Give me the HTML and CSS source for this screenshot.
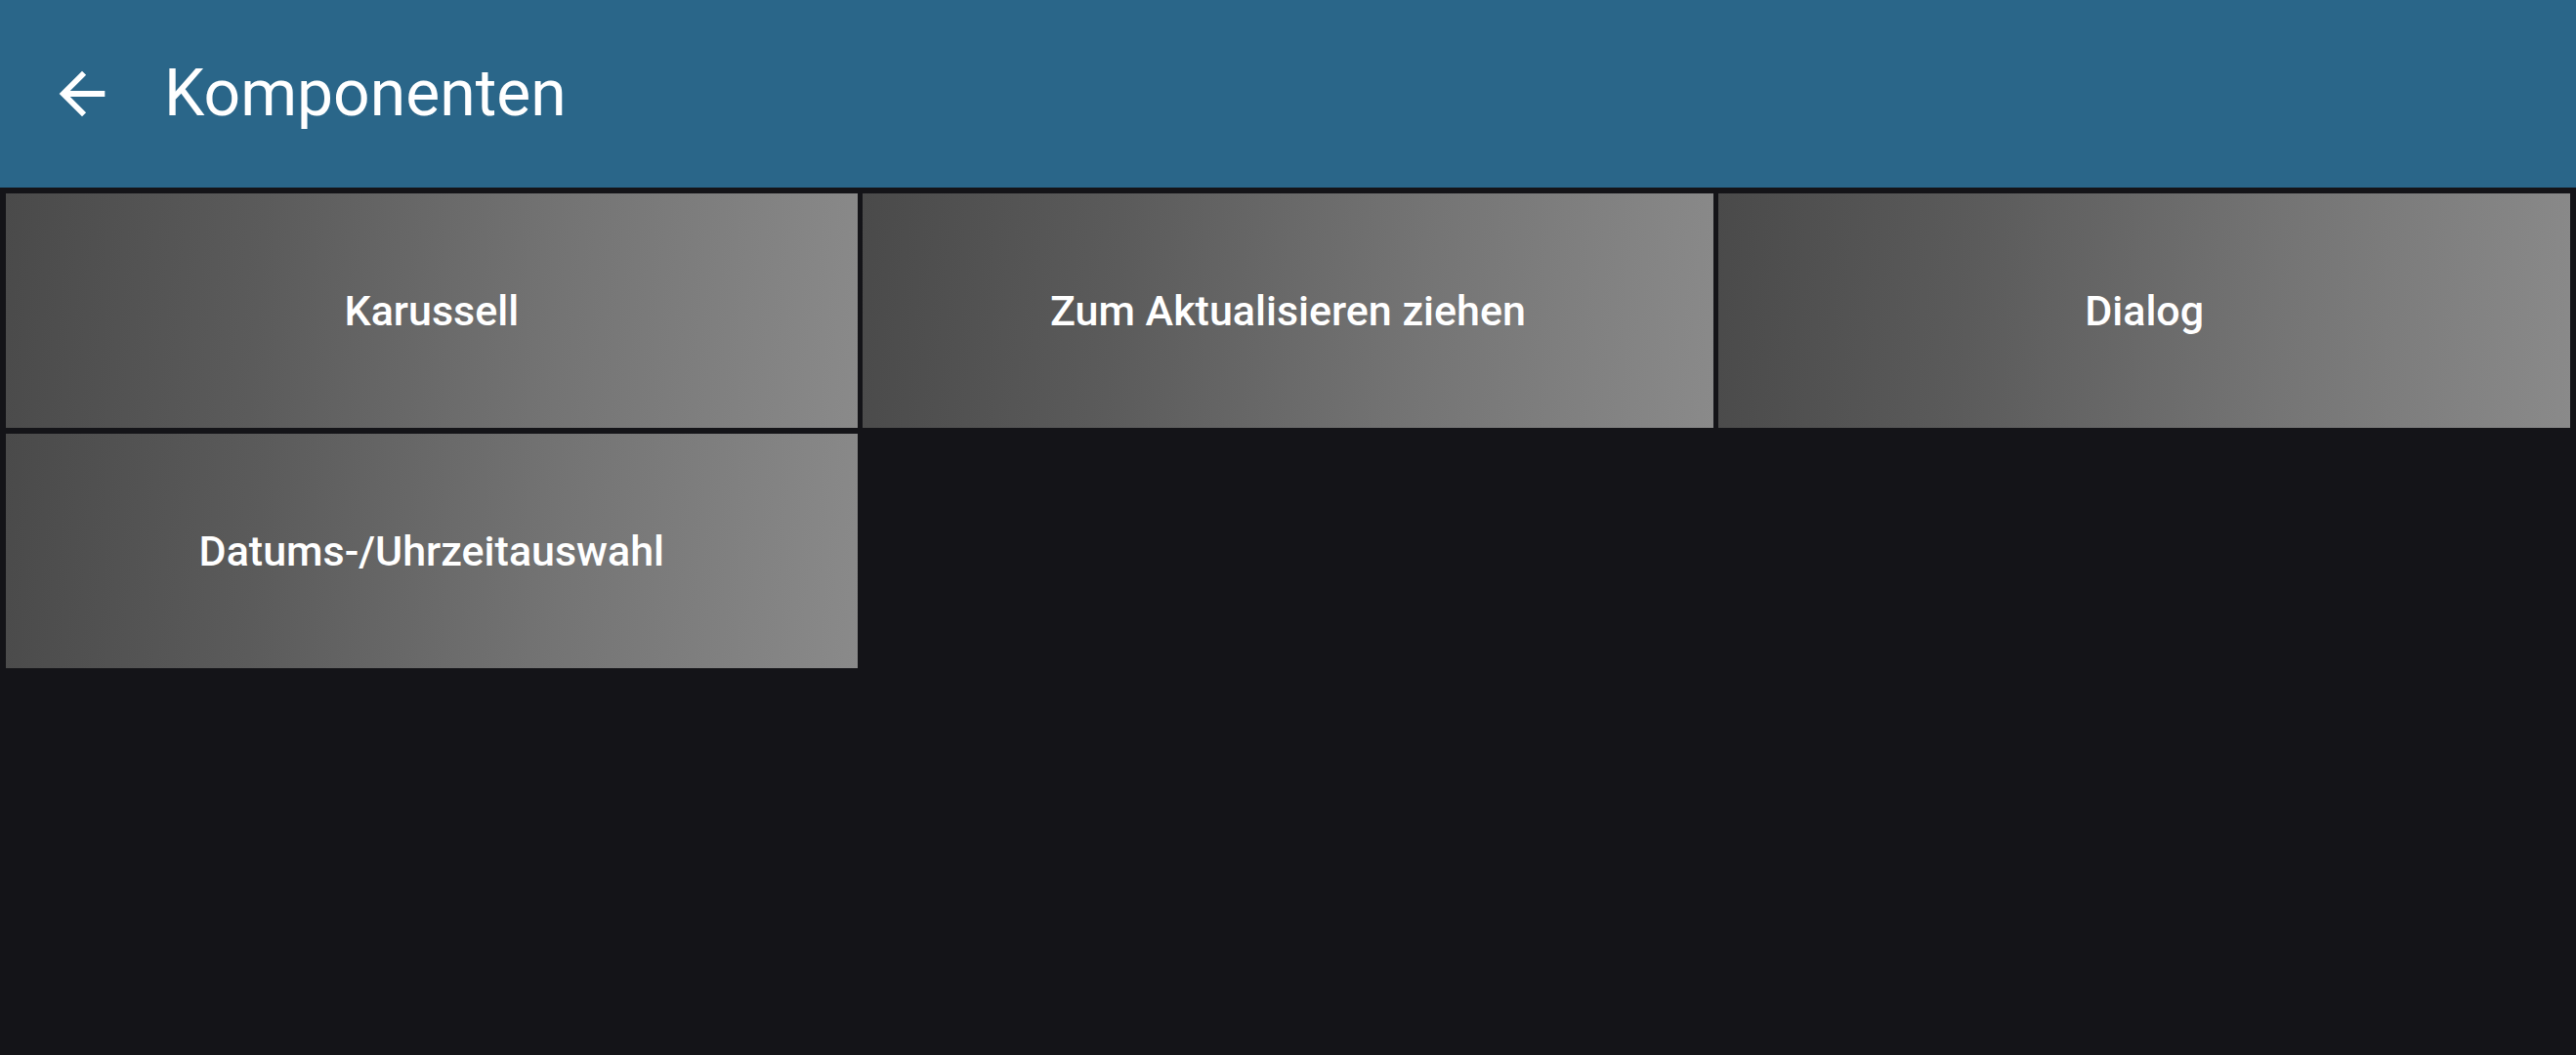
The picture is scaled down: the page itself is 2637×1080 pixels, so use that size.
FILE: index.html
```html
<!DOCTYPE html>
<html lang="de">
<head>
<meta charset="utf-8">
<title>Komponenten</title>
<link rel="stylesheet" href="styles.css">
</head>
<body>
<header class="appbar">
  <button class="back" aria-label="Zurück">
    <svg viewBox="0 0 24 24" width="70" height="70"><path fill="#ffffff" d="M20 11H7.83l5.59-5.59L12 4l-8 8 8 8 1.41-1.41L7.83 13H20v-2z"/></svg>
  </button>
  <h1 class="title">Komponenten</h1>
</header>
<main class="grid">
  <div class="tile">Karussell</div>
  <div class="tile">Zum Aktualisieren ziehen</div>
  <div class="tile">Dialog</div>
  <div class="tile">Datums-/Uhrzeitauswahl</div>
</main>
</body>
</html>
```
FILE: styles.css
```css
html, body {
  margin: 0;
  padding: 0;
  background: #141418;
  font-family: Roboto, "Noto Sans", sans-serif;
  color: #ffffff;
  height: 100%;
}
.appbar {
  height: 192px;
  background: #2a6689;
  display: flex;
  align-items: center;
  box-sizing: border-box;
}
.back {
  background: none;
  border: 0;
  padding: 0;
  margin: 0 0 0 49px;
  width: 70px;
  height: 70px;
  display: flex;
  cursor: pointer;
}
.title {
  margin: 0 0 0 49px;
  font-size: 66px;
  font-weight: 400;
  line-height: 1;
  color: #ffffff;
}
.grid {
  display: grid;
  grid-template-columns: repeat(3, 1fr);
  grid-auto-rows: 240px;
  gap: 6px 5px;
  padding: 6px;
}
.tile {
  display: flex;
  align-items: center;
  justify-content: center;
  background: linear-gradient(95deg, #4a4a4a 0%, #5b5b5b 30%, #747474 65%, #8a8a8a 100%);
  font-size: 43px;
  font-weight: 500;
  color: #ffffff;
}
```
